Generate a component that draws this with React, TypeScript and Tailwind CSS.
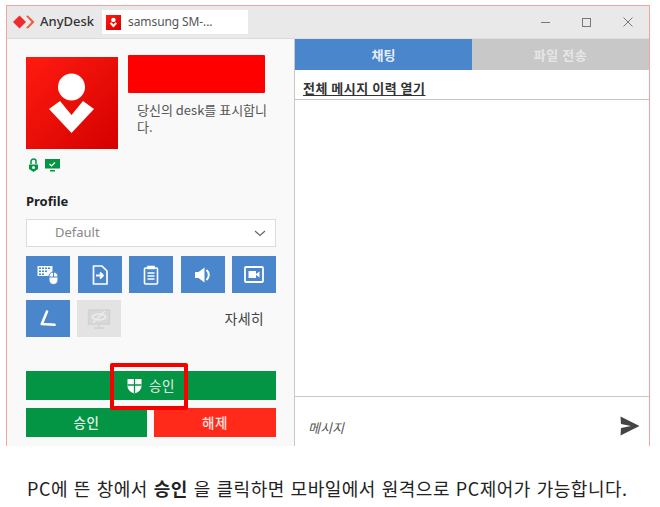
const KR = "font-['Noto_Sans_CJK_KR','Noto_Sans',sans-serif]";

function Logo() {
  return (
    <svg width="22" height="14" viewBox="0 0 22 14">
      <path d="M0 7 L6.5 0.5 L13 7 L6.5 13.5 Z" fill="#ef2b2d" />
      <path d="M13 1 L15 0.5 L21.5 7 L15 13.5 L13 13 L18.5 7 Z" fill="#ef5b3d" />
    </svg>
  );
}

function DeskAvatar({ size }: { size: 'lg' | 'sm' }) {
  const box = size === 'lg' ? 'w-[92px] h-[92px]' : 'w-[15px] h-[15px]';
  return (
    <div className={`${box} shrink-0 flex items-center justify-center bg-gradient-to-br from-[#ff1a10] to-[#d40000]`}>
      <svg viewBox="0 0 92 92" className="w-full h-full">
        <circle cx="45.500" cy="30" r="13.500" fill="#fff" />
        <path d="M23 52 L34 44 L45.500 58 L57 44 L68 52 L45.500 76 Z" fill="#fff" />
      </svg>
    </div>
  );
}

function ToolButton({ children, muted }: { children: React.ReactNode; muted?: boolean }) {
  return (
    <div className={`w-[44px] h-[37px] flex items-center justify-center ${muted ? 'bg-[#e3e3e3]' : 'bg-[#4a86cc]'}`}>
      {children}
    </div>
  );
}

function KeyboardIcon() {
  return (
    <svg width="22" height="20" viewBox="0 0 22 20" fill="#fff">
      <path d="M0.500 1h15v10h-15z" opacity="0.95" />
      <g fill="#4a86cc">
        <path d="M2 2.500h2v1.500h-2zM5 2.500h2v1.500h-2zM8 2.500h2v1.500h-2zM11 2.500h2v1.500h-2zM2 5.500h2v1.500h-2zM5 5.500h2v1.500h-2zM8 5.500h2v1.500h-2zM2 8.500h2v1.500h-2zM5 8.500h2v1.500h-2z" />
      </g>
      <rect x="12" y="7" width="9" height="12.500" rx="4.500" stroke="#4a86cc" strokeWidth="1" />
      <path d="M16.500 7v5M12 12h9" stroke="#4a86cc" strokeWidth="1" />
    </svg>
  );
}

function FileArrowIcon() {
  return (
    <svg width="16" height="20" viewBox="0 0 16 20" fill="none" stroke="#fff" strokeWidth="1.700" strokeLinejoin="round">
      <path d="M1.500 1h8.500l5 5v13h-13.500z" />
      <path d="M4 10.500h6.500M8 7.500l3 3-3 3" strokeWidth="1.800" />
    </svg>
  );
}

function ClipboardIcon() {
  return (
    <svg width="16" height="20" viewBox="0 0 16 20" fill="none" stroke="#fff" strokeWidth="1.600">
      <rect x="1.500" y="3" width="13" height="16" rx="1" />
      <path d="M5 3.500v-2h6v2z" fill="#fff" />
      <path d="M4.500 8h7M4.500 11h7M4.500 14h7" />
    </svg>
  );
}

function SpeakerIcon() {
  return (
    <svg width="18" height="18" viewBox="0 0 18 18" fill="#fff">
      <path d="M1 6h3.500l6-4.500v15l-6-4.500h-3.500z" />
      <path d="M12.500 4c3 2.500 3 7.500 0 10" fill="none" stroke="#fff" strokeWidth="2" />
    </svg>
  );
}

function CameraIcon() {
  return (
    <svg width="20" height="17" viewBox="0 0 20 17" fill="none">
      <rect x="1" y="1" width="18" height="15" rx="1" stroke="#fff" strokeWidth="1.800" />
      <path d="M4.500 5h7.500v7h-7.500zM12 8l3.500-2.500v6l-3.500-2.500z" fill="#fff" />
    </svg>
  );
}

function PenIcon() {
  return (
    <svg width="16" height="17" viewBox="0 0 16 17" fill="none" stroke="#fff" strokeWidth="2.600" strokeLinecap="round" strokeLinejoin="round">
      <path d="M7 1.500 L1.800 14 L14.500 14.800" />
    </svg>
  );
}

function ScreenOffIcon() {
  return (
    <svg width="24" height="22" viewBox="0 0 24 22" fill="none" stroke="#d2d2d2" strokeWidth="1.500">
      <rect x="1.500" y="2" width="21" height="14" fill="#d8d8d8" />
      <path d="M12 16v3M7 20h10" />
      <path d="M5 9c3-4 11-4 14 0-3 4-11 4-14 0zM6 15L18 3" stroke="#ececec" />
    </svg>
  );
}

function ShieldIcon() {
  return (
    <svg width="15" height="16" viewBox="0 0 15 16">
      <path d="M0.500 1h14v7c0 4-3.500 6.500-7 7.500-3.500-1-7-3.500-7-7.500z" fill="#fff" />
      <path d="M7.500 1v14.500M0.500 7h14" stroke="#039444" strokeWidth="1.300" />
    </svg>
  );
}

export default function App() {
  return (
    <div className={`relative w-[660px] h-[507px] bg-white overflow-hidden ${KR}`}>
      <div className="pt-[5px] pl-[6px]">
        <div className="w-[644px] h-[441px] flex flex-col border-x border-t border-[#f0a5a3]">
          {/* title bar */}
          <div className="h-[33px] shrink-0 flex items-center bg-[#e9e9e9] pl-[6px] border-b border-[#dcdcdc]">
            <Logo />
            <span className="ml-[5px] text-[13px] font-medium text-[#333] font-['Noto_Sans',sans-serif]">AnyDesk</span>
            <div className="ml-[8px] w-[146px] h-[24px] bg-white flex items-center pl-[4px]">
              <DeskAvatar size="sm" />
              <span className="ml-[7px] text-[12px] tracking-[-0.1px] text-[#555] font-['Noto_Sans',sans-serif]">samsung SM-...</span>
            </div>
            <div className="ml-auto flex items-center gap-[32px] pr-[16px] text-[#777]">
              <div className="w-[9px] h-px bg-[#777]" />
              <div className="w-[9px] h-[9px] border border-[#777]" />
              <svg width="10" height="10" viewBox="0 0 10 10" stroke="#777" strokeWidth="1">
                <path d="M0.500 0.500l9 9M9.500 0.500l-9 9" />
              </svg>
            </div>
          </div>

          <div className="flex-1 flex min-h-0">
            {/* left panel */}
            <div className="w-[288px] shrink-0 bg-[#f9f9f9] border-r border-[#c9c9c9] pl-[19px] pr-[18px] flex flex-col">
              <div className="flex mt-[16px]">
                <div className="mt-[2px]">
                  <DeskAvatar size="lg" />
                </div>
                <div className="ml-[10px] flex-1">
                  <div className="h-[38px] w-[137px] bg-[#ff0000] rounded-[1px]" />
                  <p className="mt-[8px] ml-[9px] text-[13px] leading-[17px] text-[#555] w-[134px]">
                    당신의 desk를 표시합니다.
                  </p>
                </div>
              </div>
              <div className="flex items-center gap-[6px] mt-[9px] ml-[2px] h-[15px]">
                <svg width="11" height="15" viewBox="0 0 11 15" fill="none">
                  <path d="M3 6V3.500a2.500 2.500 0 015 0V6" stroke="#039444" strokeWidth="1.500" />
                  <path d="M1 6.500h9v4.500l-4.500 3-4.500-3z" fill="#039444" />
                  <circle cx="5.500" cy="9.500" r="1.500" fill="#fff" />
                </svg>
                <svg width="15" height="13" viewBox="0 0 15 13">
                  <path d="M0 0h15v9.500h-15zM5 11h5v1.500h-5z" fill="#039444" />
                  <path d="M4.500 5l2 2 3.500-3.500" fill="none" stroke="#fff" strokeWidth="1.200" />
                </svg>
              </div>

              <div className="mt-[19px] text-[13px] leading-[18px] font-bold text-[#222] font-['Noto_Sans',sans-serif]">Profile</div>
              <div className="mt-[9px] w-[250px] h-[28px] bg-white border border-[#dcdcdc] flex items-center pl-[28px] pr-[9px]">
                <span className="text-[13px] text-[#888] font-['Noto_Sans',sans-serif]">Default</span>
                <svg className="ml-auto" width="12" height="7" viewBox="0 0 12 7" fill="none" stroke="#666" strokeWidth="1.200">
                  <path d="M1 1l5 4.500L11 1" />
                </svg>
              </div>

              <div className="mt-[9px] w-[250px] flex justify-between">
                <ToolButton><KeyboardIcon /></ToolButton>
                <ToolButton><FileArrowIcon /></ToolButton>
                <ToolButton><ClipboardIcon /></ToolButton>
                <ToolButton><SpeakerIcon /></ToolButton>
                <ToolButton><CameraIcon /></ToolButton>
              </div>
              <div className="mt-[7px] w-[250px] flex items-center gap-[7px]">
                <ToolButton><PenIcon /></ToolButton>
                <ToolButton muted><ScreenOffIcon /></ToolButton>
                <span className="ml-auto mr-[12px] text-[14px] tracking-[0.3px] text-[#444]">자세히</span>
              </div>

              <div className="mt-[34px] w-[250px] h-[29px] bg-[#039444] flex items-center justify-center gap-[7px] text-[13.500px] text-[#e4f3ea]">
                <ShieldIcon />
                <span className="tracking-[0.5px]">승인</span>
              </div>
              <div className="mt-[8px] w-[250px] flex justify-between text-[13.500px] font-medium">
                <div className="w-[121px] h-[29px] bg-[#039444] flex items-center justify-center text-[#e4f3ea] tracking-[0.5px]">승인</div>
                <div className="w-[122px] h-[29px] bg-[#ff2a1a] flex items-center justify-center text-[#fde3e0] tracking-[0.5px]">해제</div>
              </div>
            </div>

            {/* chat panel */}
            <div className="flex-1 min-w-0 bg-white flex flex-col">
              <div className="h-[31px] shrink-0 flex text-[13px] font-bold">
                <div className="w-1/2 bg-[#4a86cc] text-[#e6eff9] flex items-center justify-center">채팅</div>
                <div className="w-1/2 bg-[#c8c8c8] text-[#e6e6e6] flex items-center justify-center tracking-[0.5px]">파일 전송</div>
              </div>
              <div className="h-[30px] shrink-0 border-b border-[#c4c4c4] flex items-center pl-[8px] pt-[7px]">
                <span className="text-[13px] tracking-[0.5px] font-bold text-[#333] underline underline-offset-2">전체 메시지 이력 열기</span>
              </div>
              <div className="flex-1" />
              <div className="h-[50px] shrink-0 border-t border-[#c9c9c9] flex items-center pl-[13px] pr-[9px] pt-[8px]">
                <span className="mt-[4px] text-[13px] italic text-[#555]">메시지</span>
                <svg className="ml-auto" width="20" height="20" viewBox="0 0 20 20" fill="#444">
                  <path d="M0.500 0.500 L19.500 10 L0.500 19.500 L1 12 L11 10 L1 8 Z" />
                </svg>
              </div>
            </div>
          </div>
        </div>
      </div>

      {/* highlight over the approve button */}
      <div className="absolute left-[110px] top-[363px] w-[78px] h-[47px] border-[4px] border-[#f70000] rounded-[2px]" />

      <p className="mt-[30px] pl-[27px] text-[18px] leading-[24px] tracking-[0.5px] [word-spacing:1.300px] text-[#222] whitespace-nowrap">
        PC에 뜬 창에서 <b>승인</b> 을 클릭하면 모바일에서 원격으로 PC제어가 가능합니다.
      </p>
    </div>
  );
}
